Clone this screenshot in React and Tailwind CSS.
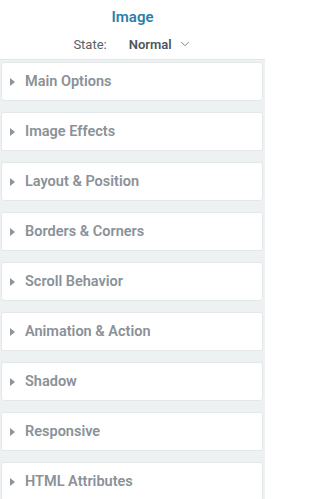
import { ChevronDown } from "lucide-react";

const sections = [
  "Main Options",
  "Image Effects",
  "Layout & Position",
  "Borders & Corners",
  "Scroll Behavior",
  "Animation & Action",
  "Shadow",
  "Responsive",
  "HTML Attributes",
];

const Section = ({ title }) => (
  <div className="flex h-[39px] items-center rounded-[3px] border border-[#e4e8ea] bg-white pl-[8px]">
    <svg width="5" height="8" viewBox="0 0 5 8" className="mr-[10px]">
      <path d="M0 0 L5 4 L0 8 Z" fill="#8d949b" />
    </svg>
    <span className="text-[14.5px] font-semibold text-[#8a9198]">{title}</span>
  </div>
);

export default function App() {
  return (
    <div
      className="h-[499px] w-[265px] overflow-hidden bg-[#eef1f2]"
      style={{ fontFamily: "Roboto, 'Liberation Sans', sans-serif" }}
    >
      <div className="flex h-[60px] flex-col items-center border-b border-[#e2e6e8] bg-white pt-[6px]">
        <div className="text-[15px] font-semibold text-[#2b7fa8]">Image</div>
        <div className="mt-[6px] flex items-center text-[13px]">
          <span className="text-[#5b6066]">State:</span>
          <span className="ml-[22px] font-semibold text-[#50555b]">Normal</span>
          <ChevronDown size={14} strokeWidth={1.5} className="ml-[6px] text-[#6b7075]" />
        </div>
      </div>
      <div className="flex flex-col gap-[11px] pl-[1px] pr-[2px] pt-[2px]">
        {sections.map((s) => (
          <Section key={s} title={s} />
        ))}
      </div>
    </div>
  );
}
